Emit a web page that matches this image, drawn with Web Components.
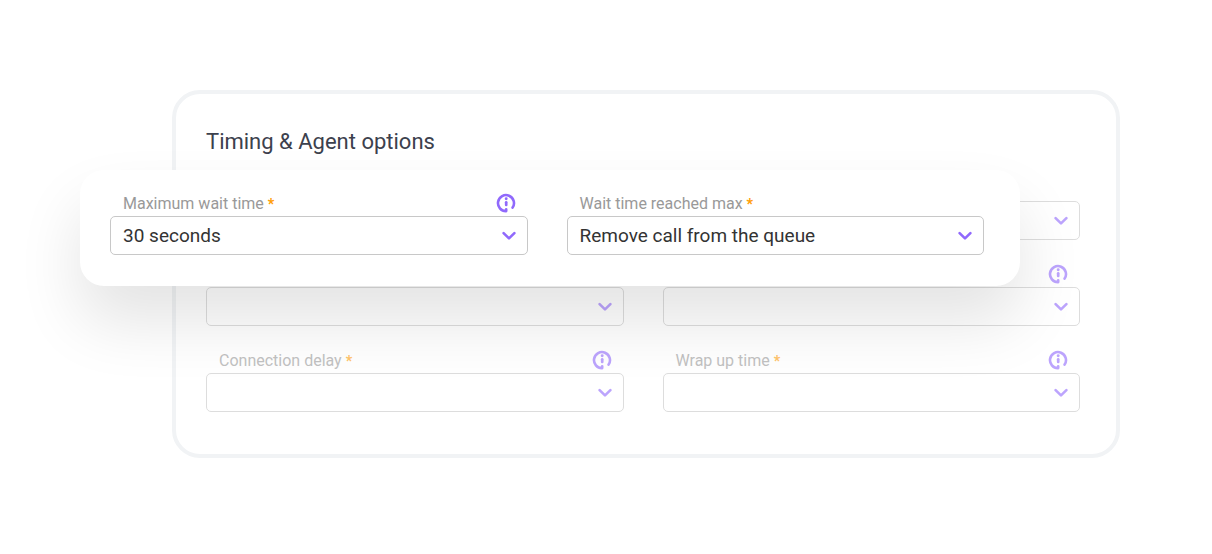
<!DOCTYPE html>
<html lang="en">
<head>
<meta charset="utf-8">
<meta name="viewport" content="width=device-width, initial-scale=1">
<title>Timing &amp; Agent options</title>
<style>
  body { margin: 0; background: #fff; font-family: Roboto, "Liberation Sans", sans-serif; }
</style>
</head>
<body>
<timing-options></timing-options>

<script>
  class InfoIcon extends HTMLElement {
    constructor() {
      super();
      this.attachShadow({ mode: "open" }).innerHTML = `
        <style>
          :host { display: block; width: 20px; height: 20px; }
          svg { display: block; width: 100%; height: 100%; }
        </style>
        <svg viewBox="0 0 20 20" fill="none" stroke="#9069fc" aria-hidden="true">
          <path d="M10.2 16.2V18.1A8 8 0 1 1 16.6 14.6" stroke-width="2.6" stroke-linecap="round" stroke-linejoin="round"/>
          <path d="M10.2 9.3V11.9" stroke-width="2.7" stroke-linecap="round"/>
          <circle cx="10.2" cy="5.8" r="1.45" fill="#9069fc" stroke="none"/>
        </svg>`;
    }
  }
  customElements.define("info-icon", InfoIcon);

  class SelectField extends HTMLElement {
    connectedCallback() {
      if (this.shadowRoot) return;
      const label = this.getAttribute("label");
      const value = this.getAttribute("value") || "";
      const name = this.getAttribute("name") || label;
      this.attachShadow({ mode: "open" }).innerHTML = `
        <style>
          :host { display: block; min-width: 0; }
          .head {
            display: flex; align-items: center; justify-content: space-between;
            height: 26px; padding: 0 12px 0 13px;
            font-size: 16px; line-height: 26px; color: #999;
          }
          label { padding-top: 2px; }
          .star { color: #ff9f0a; font-size: 14px; font-weight: 900; }
          info-icon { margin-left: auto; }
          .box { position: relative; }
          select {
            appearance: none; display: block; box-sizing: border-box;
            width: 100%; height: 39px; margin: 0; padding: 0 40px 0 12px;
            border: 1px solid #c8c8c8; border-radius: 5px; background: #fff;
            font: inherit; font-size: 19px; color: #333;
          }
          .chevron {
            position: absolute; right: 12px; top: 12px;
            width: 14px; height: 14px; pointer-events: none;
          }
        </style>
        <div class="head">
          ${label ? `<label for="choice">${label} <span class="star">*</span></label>` : ""}
          ${this.hasAttribute("info") ? "<info-icon></info-icon>" : ""}
        </div>
        <div class="box">
          <select id="choice"${label ? "" : ` aria-label="${name}"`}><option>${value}</option></select>
          <svg class="chevron" viewBox="0 0 14 14" fill="none" stroke="#9069fc" stroke-width="2.6" stroke-linecap="round" stroke-linejoin="round" aria-hidden="true"><path d="M1.6 5.1L7 10.4L12.4 5.1"/></svg>
        </div>`;
    }
  }
  customElements.define("select-field", SelectField);

  class FieldGrid extends HTMLElement {
    constructor() {
      super();
      this.attachShadow({ mode: "open" }).innerHTML = `
        <style>
          :host { display: grid; grid-template-columns: repeat(2, minmax(0, 1fr)); gap: 21px 39px; }
        </style>
        <slot></slot>`;
    }
  }
  customElements.define("field-grid", FieldGrid);

  class OptionsCard extends HTMLElement {
    constructor() {
      super();
      this.attachShadow({ mode: "open" }).innerHTML = `
        <style>
          :host {
            display: block; padding: 34px 36px 42px 30px;
            border: 4px solid #f1f3f5; border-radius: 28px; background: #fff;
          }
          h2 { margin: 0 0 19px; font-size: 22px; line-height: 28px; font-weight: 400; color: #3c414d; }
        </style>
        <h2><slot name="title"></slot></h2>
        <slot></slot>`;
    }
  }
  customElements.define("options-card", OptionsCard);

  class FloatingPanel extends HTMLElement {
    constructor() {
      super();
      this.attachShadow({ mode: "open" }).innerHTML = `
        <style>
          :host {
            display: block; padding: 20px 36px 31px 30px;
            border-radius: 24px; background: #fff;
            box-shadow: 0 36px 64px rgba(0, 0, 0, .11);
          }
        </style>
        <slot></slot>`;
    }
  }
  customElements.define("floating-panel", FloatingPanel);

  class TimingOptions extends HTMLElement {
    constructor() {
      super();
      this.attachShadow({ mode: "open" }).innerHTML = `
        <style>
          :host { display: block; padding: 90px 92px 90px 80px; }
          .stage { position: relative; }
          options-card { margin-left: 92px; }
          .muted { opacity: .6; }
          floating-panel { position: absolute; left: 0; right: 100px; top: 80px; }
        </style>
        <div class="stage">
          <options-card>
            <span slot="title">Timing &amp; Agent options</span>
            <field-grid class="muted">
              <select-field name="Wait time"></select-field>
              <select-field name="Action after wait time"></select-field>
              <select-field name="Queue size"></select-field>
              <select-field name="Agent timeout" info></select-field>
              <select-field label="Connection delay" info></select-field>
              <select-field label="Wrap up time" info></select-field>
            </field-grid>
          </options-card>
          <floating-panel>
            <field-grid>
              <select-field label="Maximum wait time" value="30 seconds" info></select-field>
              <select-field label="Wait time reached max" value="Remove call from the queue"></select-field>
            </field-grid>
          </floating-panel>
        </div>`;
    }
  }
  customElements.define("timing-options", TimingOptions);
</script>
</body>
</html>
